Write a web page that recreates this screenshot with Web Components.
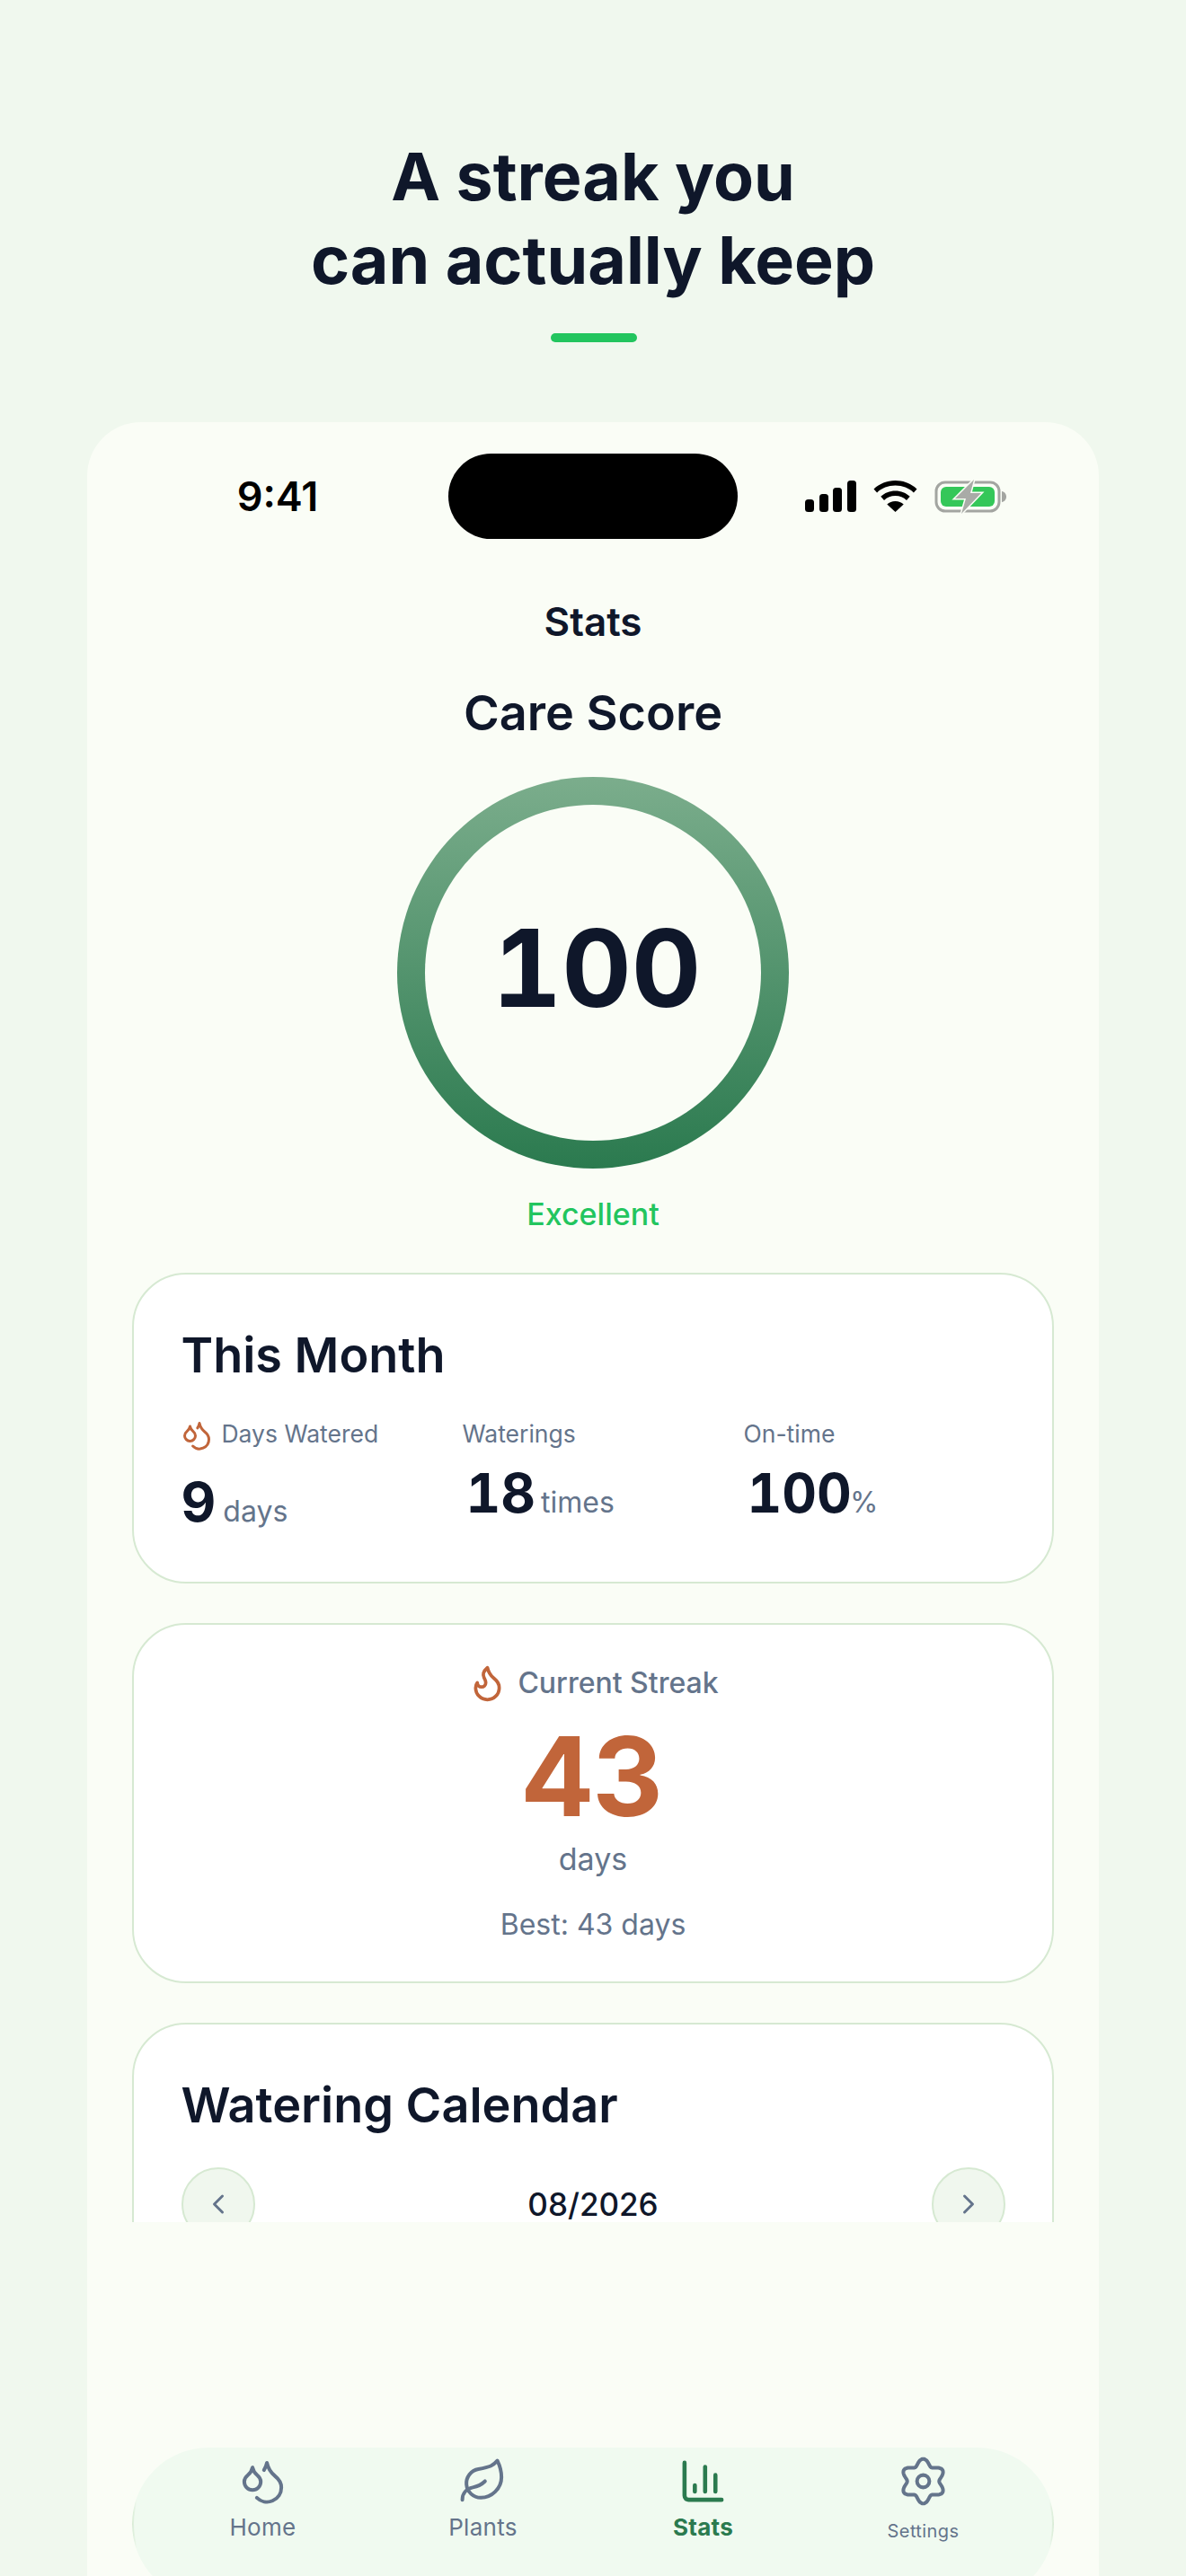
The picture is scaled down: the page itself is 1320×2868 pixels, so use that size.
<!DOCTYPE html>
<html lang="en"><head><meta charset="utf-8"><title>Stats</title>
<style>
html,body{margin:0;padding:0;height:2868px;overflow:hidden;background:#f0f8ee;font-family:Inter,"Liberation Sans",sans-serif;color:#0f172a}
</style></head><body>
<promo-page>
  <promo-header>A streak you<br>can actually keep</promo-header>
  <phone-frame>
    <status-bar></status-bar>
    <screen-title>Stats</screen-title>
    <score-ring score="100" label="Excellent">Care Score</score-ring>
    <month-card></month-card>
    <streak-card></streak-card>
    <calendar-card></calendar-card>
    <tab-bar slot="overlay"></tab-bar>
  </phone-frame>
</promo-page>
<script>
const svg=(size,inner,sw=2)=>`<svg xmlns="http://www.w3.org/2000/svg" width="${size}" height="${size}" viewBox="0 0 24 24" fill="none" stroke="currentColor" stroke-width="${sw}" stroke-linecap="round" stroke-linejoin="round">${inner}</svg>`;
const I={
 drops:'<path d="M7 16.3c2.2 0 4-1.83 4-4.05 0-1.16-.57-2.26-1.71-3.19S7.29 6.75 7 5.3c-.29 1.45-1.14 2.84-2.29 3.76S3 11.1 3 12.25c0 2.22 1.8 4.05 4 4.05z"/><path d="M12.56 6.6A10.97 10.97 0 0 0 14 3.02c.5 2.5 2 4.9 4 6.5s3 3.5 3 5.5a6.98 6.98 0 0 1-11.91 4.97"/>',
 leaf:'<path d="M11 20A7 7 0 0 1 9.8 6.1C15.5 5 17 4.48 19 2c1 2 2 4.18 2 8 0 5.5-4.78 10-10 10Z"/><path d="M2 21c0-3 1.85-5.36 5.08-6C9.5 14.52 12 13 13 12"/>',
 chart:'<path d="M3 3v16a2 2 0 0 0 2 2h16"/><path d="M18 17V9"/><path d="M13 17V5"/><path d="M8 17v-3"/>',
 flame:'<path d="M8.5 14.5A2.5 2.5 0 0 0 11 12c0-1.38-.5-2-1-3-1.072-2.143-.224-4.054 2-6 .5 2.5 2 4.9 4 6.5 2 1.6 3 3.5 3 5.5a7 7 0 1 1-14 0c0-1.153.433-2.294 1-3a2.5 2.5 0 0 0 2.5 2.5z"/>',
 left:'<path d="m15 18-6-6 6-6"/>',
 right:'<path d="m9 18 6-6-6-6"/>',
 gear:(()=>{let d='';for(let i=0;i<=120;i++){const t=i/120*2*Math.PI;const r=9.3+1.55*Math.cos(6*t);const x=12+r*Math.sin(t),y=12-r*Math.cos(t);d+=(i?'L':'M')+x.toFixed(2)+' '+y.toFixed(2);}return `<path d="${d}Z"/><circle cx="12" cy="12" r="3"/>`})()
};
function def(name,css,html){
  customElements.define(name,class extends HTMLElement{
    constructor(){super();this.attachShadow({mode:'open'});}
    connectedCallback(){
      const h=typeof html==='function'?html(this):html;
      this.shadowRoot.innerHTML=`<style>${css}</style>${h}`;
    }
  });
}
def('promo-page',':host{display:block;height:2868px;overflow:hidden}','<slot></slot>');
def('promo-header',`:host{display:flex;flex-direction:column;align-items:center;padding-top:150px;height:232px}
 h1{margin:0;font:700 73.5px/93px Inter,sans-serif;color:#0f172a;text-align:center}
 i{display:block;width:96px;height:10px;border-radius:5px;background:#22c55e;margin-top:35px;margin-left:2px}`,
 '<h1><slot></slot></h1><i></i>');
def('phone-frame',`:host{display:block;position:relative;margin:88px 97px 0;height:2398px;background:#fafdf6;border-radius:60px 60px 0 0;overflow:hidden}
 .scroll{height:2004px;overflow:hidden;padding:0 50px;box-sizing:border-box}`,
 '<div class="scroll"><slot></slot></div><slot name="overlay"></slot>');
def('status-bar',`:host{display:flex;align-items:center;justify-content:space-between;padding-top:35px;height:95px;margin:0 -50px;position:relative}
 .time{width:92px;margin-left:166px;font:600 45px/95px Inter,sans-serif;color:#000;text-align:center;white-space:nowrap;display:flex;justify-content:center}
 .island{position:absolute;left:402px;top:35px;width:322px;height:95px;border-radius:48px;background:#000}
 .icons{display:flex;align-items:center;margin-right:103px;gap:19px;height:95px}
 svg{display:block}`,
 `<span class="time">9:41</span><span class="island"></span><span class="icons">
 <svg width="57" height="36" viewBox="0 0 57 36"><rect x="0" y="21" width="10" height="14" rx="3.5"/><rect x="16" y="15" width="10" height="20" rx="3.5"/><rect x="31" y="8" width="10" height="27" rx="3.5"/><rect x="47" y="0" width="10" height="35" rx="3.5"/></svg>
 <svg width="49" height="35" viewBox="0 0 49 35"><path d="M24.5 0C15 0 6.8 3.6.5 9.4l3.6 4C9.4 8.500 16.500 5.600 24.500 5.600S39.600 8.500 44.900 13.400l3.600-4C42.200 3.600 34 0 24.500 0z"/><path d="M24.500 11.500c-6.400 0-12 2.400-16.200 6.300l3.700 4.100C15.300 18.900 19.700 17 24.500 17s9.200 1.900 12.500 4.900l3.700-4.100c-4.200-3.900-9.800-6.300-16.200-6.300z"/><path d="M24.500 23c-3.700 0-6.800 1.300-9.200 3.500l9.200 8.500 9.200-8.500C31.300 24.300 28.200 23 24.500 23z"/></svg>
 <svg width="80" height="38" viewBox="0 0 80 38"><rect x="2" y="3" width="70" height="32" rx="10" fill="none" stroke="#a3a5a1" stroke-width="3"/><rect x="7" y="8" width="60" height="22" rx="6" fill="#34c759"/><path d="M75 13c3 .5 5 3 5 6s-2 5.500-5 6z" fill="#a3a5a1"/><path d="M44 0 23 21h12l-5 17 22-23H40z" fill="#a9aba7" stroke="#fafdf6" stroke-width="3" paint-order="stroke"/></svg>
 </span>`);
def('screen-title',':host{display:block;margin-top:62px;font:600 44px/60px Inter,sans-serif;color:#0f172a;text-align:center}','<slot></slot>');
def('score-ring',`:host{display:flex;flex-direction:column;align-items:center;margin-top:36px}
 h2{margin:0;font:600 54px/72px Inter,sans-serif;color:#0f172a}
 .ring{margin-top:35px;width:436px;height:436px;border-radius:50%;background:linear-gradient(180deg,#7bad8c,#2b7a4f);display:flex;padding:31px;box-sizing:border-box}
 .in{flex:1;border-radius:50%;background:#fafdf6;display:flex;align-items:center;justify-content:center;padding:0 0 10px 8px;box-sizing:border-box;font:700 120px/1 Inter,sans-serif;font-variant-numeric:tabular-nums;color:#0f172a}
 .lab{margin-top:26px;font:500 34px/50px Inter,sans-serif;color:#22c55e}`,
 h=>`<h2><slot></slot></h2><div class="ring"><div class="in">${h.getAttribute('score')}</div></div><div class="lab">${h.getAttribute('label')}</div>`);
const cardCss=`:host{display:block;background:#fff;border:2.5px solid #d6e9d2;border-radius:60px;box-sizing:border-box;width:1026px}
 h3{margin:0;font:600 54px/72px Inter,sans-serif;color:#0f172a}`;
def('month-card',cardCss+`:host{margin-top:40px;height:346px;padding:54px 52.5px 0}
 .g{display:grid;grid-template-columns:290px 290px 290px;column-gap:23px;margin-top:30.5px}
 .l{display:flex;align-items:flex-start;gap:10px;font:400 26.5px/40px Inter,sans-serif;color:#64748b;height:40px}
 .l svg{color:#c1653a;margin-top:4px;flex:none;margin-left:-1px}
 .first .l{height:50px}
 .v{margin-top:10px;padding-left:4px;font:700 60px/72px Inter,sans-serif;font-variant-numeric:tabular-nums;color:#0f172a;white-space:nowrap}
 .first .v{padding-left:0}
 .v span{font:400 32px/72px Inter,sans-serif;color:#64748b;margin-left:6px}
 .first .v span{margin-left:8px}
 .v span.p{margin-left:-2px}`,
 `<h3>This Month</h3><div class="g">
 <div class="first"><div class="l">${svg(36,I.drops)}<span>Days Watered</span></div><div class="v">9<span>days</span></div></div>
 <div><div class="l"><span>Waterings</span></div><div class="v">18<span>times</span></div></div>
 <div><div class="l"><span>On-time</span></div><div class="v">100<span class="p">%</span></div></div>
 </div>`);
def('streak-card',cardCss+`:host{margin-top:44px;height:401px;padding-top:42px;display:flex;flex-direction:column;align-items:center}
 .h{display:flex;align-items:center;gap:11px;height:45px;font:500 32px/45px Inter,sans-serif;color:#64748b}
 .h svg{color:#c1653a}
 .n{margin-top:16px;font:700 122px/132px Inter,sans-serif;font-variant-numeric:tabular-nums;color:#c1653a}
 .d{margin-top:1px;font:400 34px/50px Inter,sans-serif;color:#64748b}
 .b{margin-top:26px;font:400 32px/44px Inter,sans-serif;color:#64748b}`,
 `<div class="h">${svg(45,I.flame)}<span>Current Streak</span></div><div class="n">43</div><div class="d">days</div><div class="b">Best: 43 days</div>`);
def('calendar-card',cardCss+`:host{margin-top:44px;height:700px;padding:54px 52.5px 0}
 .nav{display:flex;align-items:center;justify-content:space-between;margin-top:32.5px}
 .m{font:500 35px/50px Inter,sans-serif;color:#0f172a}
 .b{width:82px;height:82px;border-radius:50%;background:#f0f7ee;border:2.5px solid #d6e9d2;box-sizing:border-box;display:flex;align-items:center;justify-content:center;color:#64748b}`,
 `<h3>Watering Calendar</h3><div class="nav"><span class="b">${svg(36,I.left)}</span><span class="m">08/2026</span><span class="b">${svg(36,I.right)}</span></div>`);
def('tab-bar',`:host{position:absolute;left:50px;bottom:-27px;width:1026px;height:170px;border-radius:85px;background:#f0faf0;box-sizing:border-box;padding:10px 23px 0;display:grid;grid-template-columns:repeat(4,245px)}
 .edge{position:absolute;inset:0;border:2.5px solid #d6e9d2;border-radius:85px;box-sizing:border-box;-webkit-mask-image:linear-gradient(90deg,#000,transparent 5px,transparent calc(100% - 5px),#000);mask-image:linear-gradient(90deg,#000,transparent 5px,transparent calc(100% - 5px),#000)}
 .t{display:flex;flex-direction:column;align-items:center;color:#64748b;position:relative}
 .t svg{display:block}
 .t span{margin-top:6px;font:400 26px/36px Inter,sans-serif;letter-spacing:.3px}
 .a{color:#2b7a4f}.a span{font-weight:700}
 .s span{font-size:20px;margin-top:10px;letter-spacing:.4px}`,
 `<div class="edge"></div>
 <div class="t">${svg(55,I.drops,1.75)}<span>Home</span></div>
 <div class="t">${svg(55,I.leaf,1.75)}<span>Plants</span></div>
 <div class="t a">${svg(55,I.chart,2)}<span>Stats</span></div>
 <div class="t s">${svg(55,I.gear,1.75)}<span>Settings</span></div>`);
</script>
</body></html>
